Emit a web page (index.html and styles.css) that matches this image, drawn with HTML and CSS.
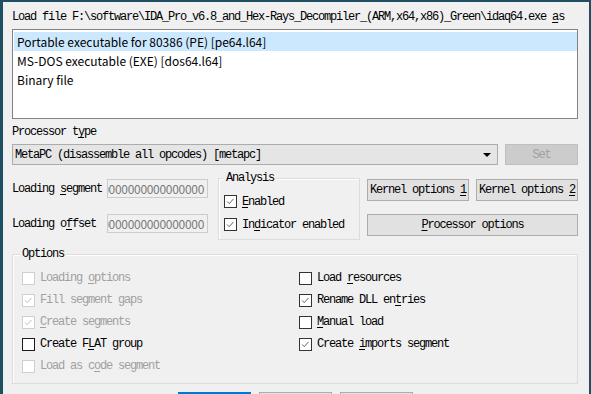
FILE: index.html
```html
<!DOCTYPE html>
<html lang="en">
<head>
  <meta charset="UTF-8">
  <title>Load a new file</title>
  <link rel="stylesheet" href="styles.css">
</head>
<body>
  <div class="window">
    <div class="label">Load file F:\software\IDA_Pro_v6.8_and_Hex-Rays_Decompiler_(ARM,x64,x86)_Green\idaq64.exe <u>a</u>s</div>
    <ul class="listbox">
      <li class="selected">Portable executable for 80386 (PE) [pe64.l64]</li>
      <li>MS-DOS executable (EXE) [dos64.l64]</li>
      <li>Binary file</li>
    </ul>

    <div class="label proc-label">Processor t<u>y</u>pe</div>
    <div class="proc-row">
      <div class="combo">
        <span>MetaPC (disassemble all opcodes) [metapc]</span>
        <span class="arrow"></span>
      </div>
      <button class="btn set-btn" disabled>Set</button>
    </div>

    <div class="middle">
      <div class="fields">
        <div class="field">
          <span class="field-label">Loading <u>s</u>egment</span>
          <div class="input"><span class="value">0000000000000000</span></div>
        </div>
        <div class="field">
          <span class="field-label">Loading o<u>f</u>fset</span>
          <div class="input"><span class="value">0000000000000000</span></div>
        </div>
      </div>

      <div class="group analysis">
        <span class="group-title">Analysis</span>
        <div class="check-list">
          <div class="check"><span class="cb"><svg viewBox="0 0 13 13"><polyline points="2.5,6.5 5,9 10,3.5"/></svg></span><span><u>E</u>nabled</span></div>
          <div class="check"><span class="cb"><svg viewBox="0 0 13 13"><polyline points="2.5,6.5 5,9 10,3.5"/></svg></span><span>In<u>d</u>icator enabled</span></div>
        </div>
      </div>

      <div class="side-buttons">
        <div class="kernel-row">
          <button class="btn">Kernel options <u>1</u></button>
          <button class="btn">Kernel options <u>2</u></button>
        </div>
        <button class="btn"><u>P</u>rocessor options</button>
      </div>
    </div>

    <div class="group options">
      <span class="group-title">Options</span>
      <div class="options-grid">
        <div class="check-col">
          <div class="check disabled"><span class="cb"></span><span>Loading <u>o</u>ptions</span></div>
          <div class="check disabled"><span class="cb"><svg viewBox="0 0 13 13"><polyline points="2.5,6.5 5,9 10,3.5"/></svg></span><span>Fill segment gaps</span></div>
          <div class="check disabled"><span class="cb"><svg viewBox="0 0 13 13"><polyline points="2.5,6.5 5,9 10,3.5"/></svg></span><span><u>C</u>reate segments</span></div>
          <div class="check"><span class="cb strong"></span><span>Create F<u>L</u>AT group</span></div>
          <div class="check disabled"><span class="cb"></span><span>Load as c<u>o</u>de segment</span></div>
        </div>
        <div class="check-col">
          <div class="check"><span class="cb"></span><span>Load <u>r</u>esources</span></div>
          <div class="check"><span class="cb"><svg viewBox="0 0 13 13"><polyline points="2.5,6.5 5,9 10,3.5"/></svg></span><span>Rename DLL en<u>t</u>ries</span></div>
          <div class="check"><span class="cb"></span><span><u>M</u>anual load</span></div>
          <div class="check"><span class="cb"><svg viewBox="0 0 13 13"><polyline points="2.5,6.5 5,9 10,3.5"/></svg></span><span>Create <u>i</u>mports segment</span></div>
        </div>
      </div>
    </div>

    <div class="dialog-buttons">
      <button class="btn default">OK</button>
      <button class="btn">Cancel</button>
      <button class="btn">Help</button>
    </div>
  </div>
</body>
</html>
```

FILE: styles.css
```css
/* Windows-style "Load a new file" dialog */
body {
  margin: 0;
  background: #f0f0f0;
}

.window {
  box-sizing: border-box;
  width: 591px;
  height: 394px;
  overflow: hidden;
  background: #f0f0f0;
  border-top: 2px solid #1f4f62;
  border-left: 3px solid #1f4f62;
  border-right: 2px solid #1f4f62;
  padding: 8px 11px 0 9px;
  font-family: "Liberation Mono", "Courier New", Cousine, monospace;
  font-size: 12px;
  letter-spacing: -1.2px;
  color: #000;
}

u {
  text-underline-offset: 2px;
}

.label {
  height: 14px;
  line-height: 14px;
  white-space: nowrap;
}

.listbox {
  list-style: none;
  margin: 5px 0 0;
  padding: 2px 0 0 1px;
  height: 86px;
  background: #fff;
  border: 1px solid #828282;
  font-family: "Noto Sans CJK SC", sans-serif;
  font-size: 12px;
  letter-spacing: 0;
}

.listbox li {
  height: 19px;
  line-height: 19px;
  padding-left: 3px;
}

.listbox li.selected {
  background: #cce8ff;
}

.proc-label {
  margin-top: 6px;
}

.proc-row {
  display: flex;
  gap: 7px;
  margin-top: 5px;
  height: 21px;
}

.combo {
  box-sizing: border-box;
  width: 487px;
  height: 21px;
  display: flex;
  align-items: center;
  justify-content: space-between;
  padding: 0 6px 0 2px;
  background: #e5e5e5;
  border: 1px solid #acacac;
}

.arrow {
  width: 0;
  height: 0;
  border-left: 4px solid transparent;
  border-right: 4px solid transparent;
  border-top: 4px solid #000;
}

.btn {
  box-sizing: border-box;
  height: 22px;
  padding: 0;
  background: #e1e1e1;
  border: 1px solid #adadad;
  font-family: "Liberation Mono", "Courier New", Cousine, monospace;
  font-size: 12px;
  letter-spacing: -1.2px;
  color: #000;
}

.set-btn {
  width: 73px;
  height: 21px;
  background: #cccccc;
  border-color: #bfbfbf;
  color: #a0a0a0;
}

.middle {
  display: flex;
  margin-top: 13px;
  height: 62px;
}

.fields {
  display: flex;
  flex-direction: column;
  gap: 16px;
  padding-top: 1px;
  width: 196px;
}

.field {
  display: flex;
  align-items: center;
  justify-content: space-between;
  height: 19px;
}

.input {
  box-sizing: border-box;
  width: 101px;
  height: 19px;
  display: flex;
  align-items: center;
  justify-content: flex-end;
  overflow: hidden;
  padding-right: 3px;
  background: #f0f0f0;
  border: 1px solid #cccccc;
  font-family: "Noto Sans CJK SC", sans-serif;
  font-size: 12px;
  letter-spacing: -0.3px;
  color: #7a7a7a;
}

.value {
  white-space: nowrap;
}

.group {
  box-sizing: border-box;
  border: 1px solid #dcdcdc;
  box-shadow: inset 1px 1px 0 #fff;
}

.group-title {
  display: block;
  width: fit-content;
  height: 14px;
  line-height: 14px;
  margin-top: -8px;
  padding: 0 2px;
  background: #f0f0f0;
}

.analysis {
  width: 142px;
  height: 62px;
  margin-left: 10px;
  padding: 0 0 0 5px;
}

.check-list {
  margin-top: 5px;
}

.check {
  display: flex;
  align-items: center;
  gap: 5px;
  height: 23px;
  white-space: nowrap;
}

.options .check {
  height: 22px;
}

.cb {
  box-sizing: border-box;
  width: 13px;
  height: 13px;
  flex: none;
  background: #fff;
  border: 1px solid #333;
}

.cb.strong {
  border-color: #1a1a1a;
}

.cb svg {
  display: block;
  width: 11px;
  height: 11px;
}

.cb polyline {
  fill: none;
  stroke: #555;
  stroke-width: 1.1;
}

.check.disabled {
  color: #a0a0a0;
}

.check.disabled .cb {
  border-color: #cfcfcf;
}

.check.disabled polyline {
  stroke: #b8b8b8;
}

.side-buttons {
  display: flex;
  flex-direction: column;
  gap: 13px;
  margin-left: 7px;
  padding-top: 1px;
  width: 211px;
}

.kernel-row {
  display: flex;
  justify-content: space-between;
}

.kernel-row .btn {
  width: 102px;
}

.options {
  margin-top: 14px;
  height: 130px;
  padding: 0 0 0 9px;
}

.options .group-title {
  margin-left: -2px;
}

.options-grid {
  display: grid;
  grid-template-columns: 277px 1fr;
  margin-top: 6px;
}

.dialog-buttons {
  display: flex;
  justify-content: center;
  gap: 8px;
  margin-top: 8px;
}

.dialog-buttons .btn {
  width: 73px;
  height: 23px;
}

.dialog-buttons .btn.default {
  border-color: #0078d7;
  box-shadow: inset 0 0 0 1px #0078d7;
}
```
